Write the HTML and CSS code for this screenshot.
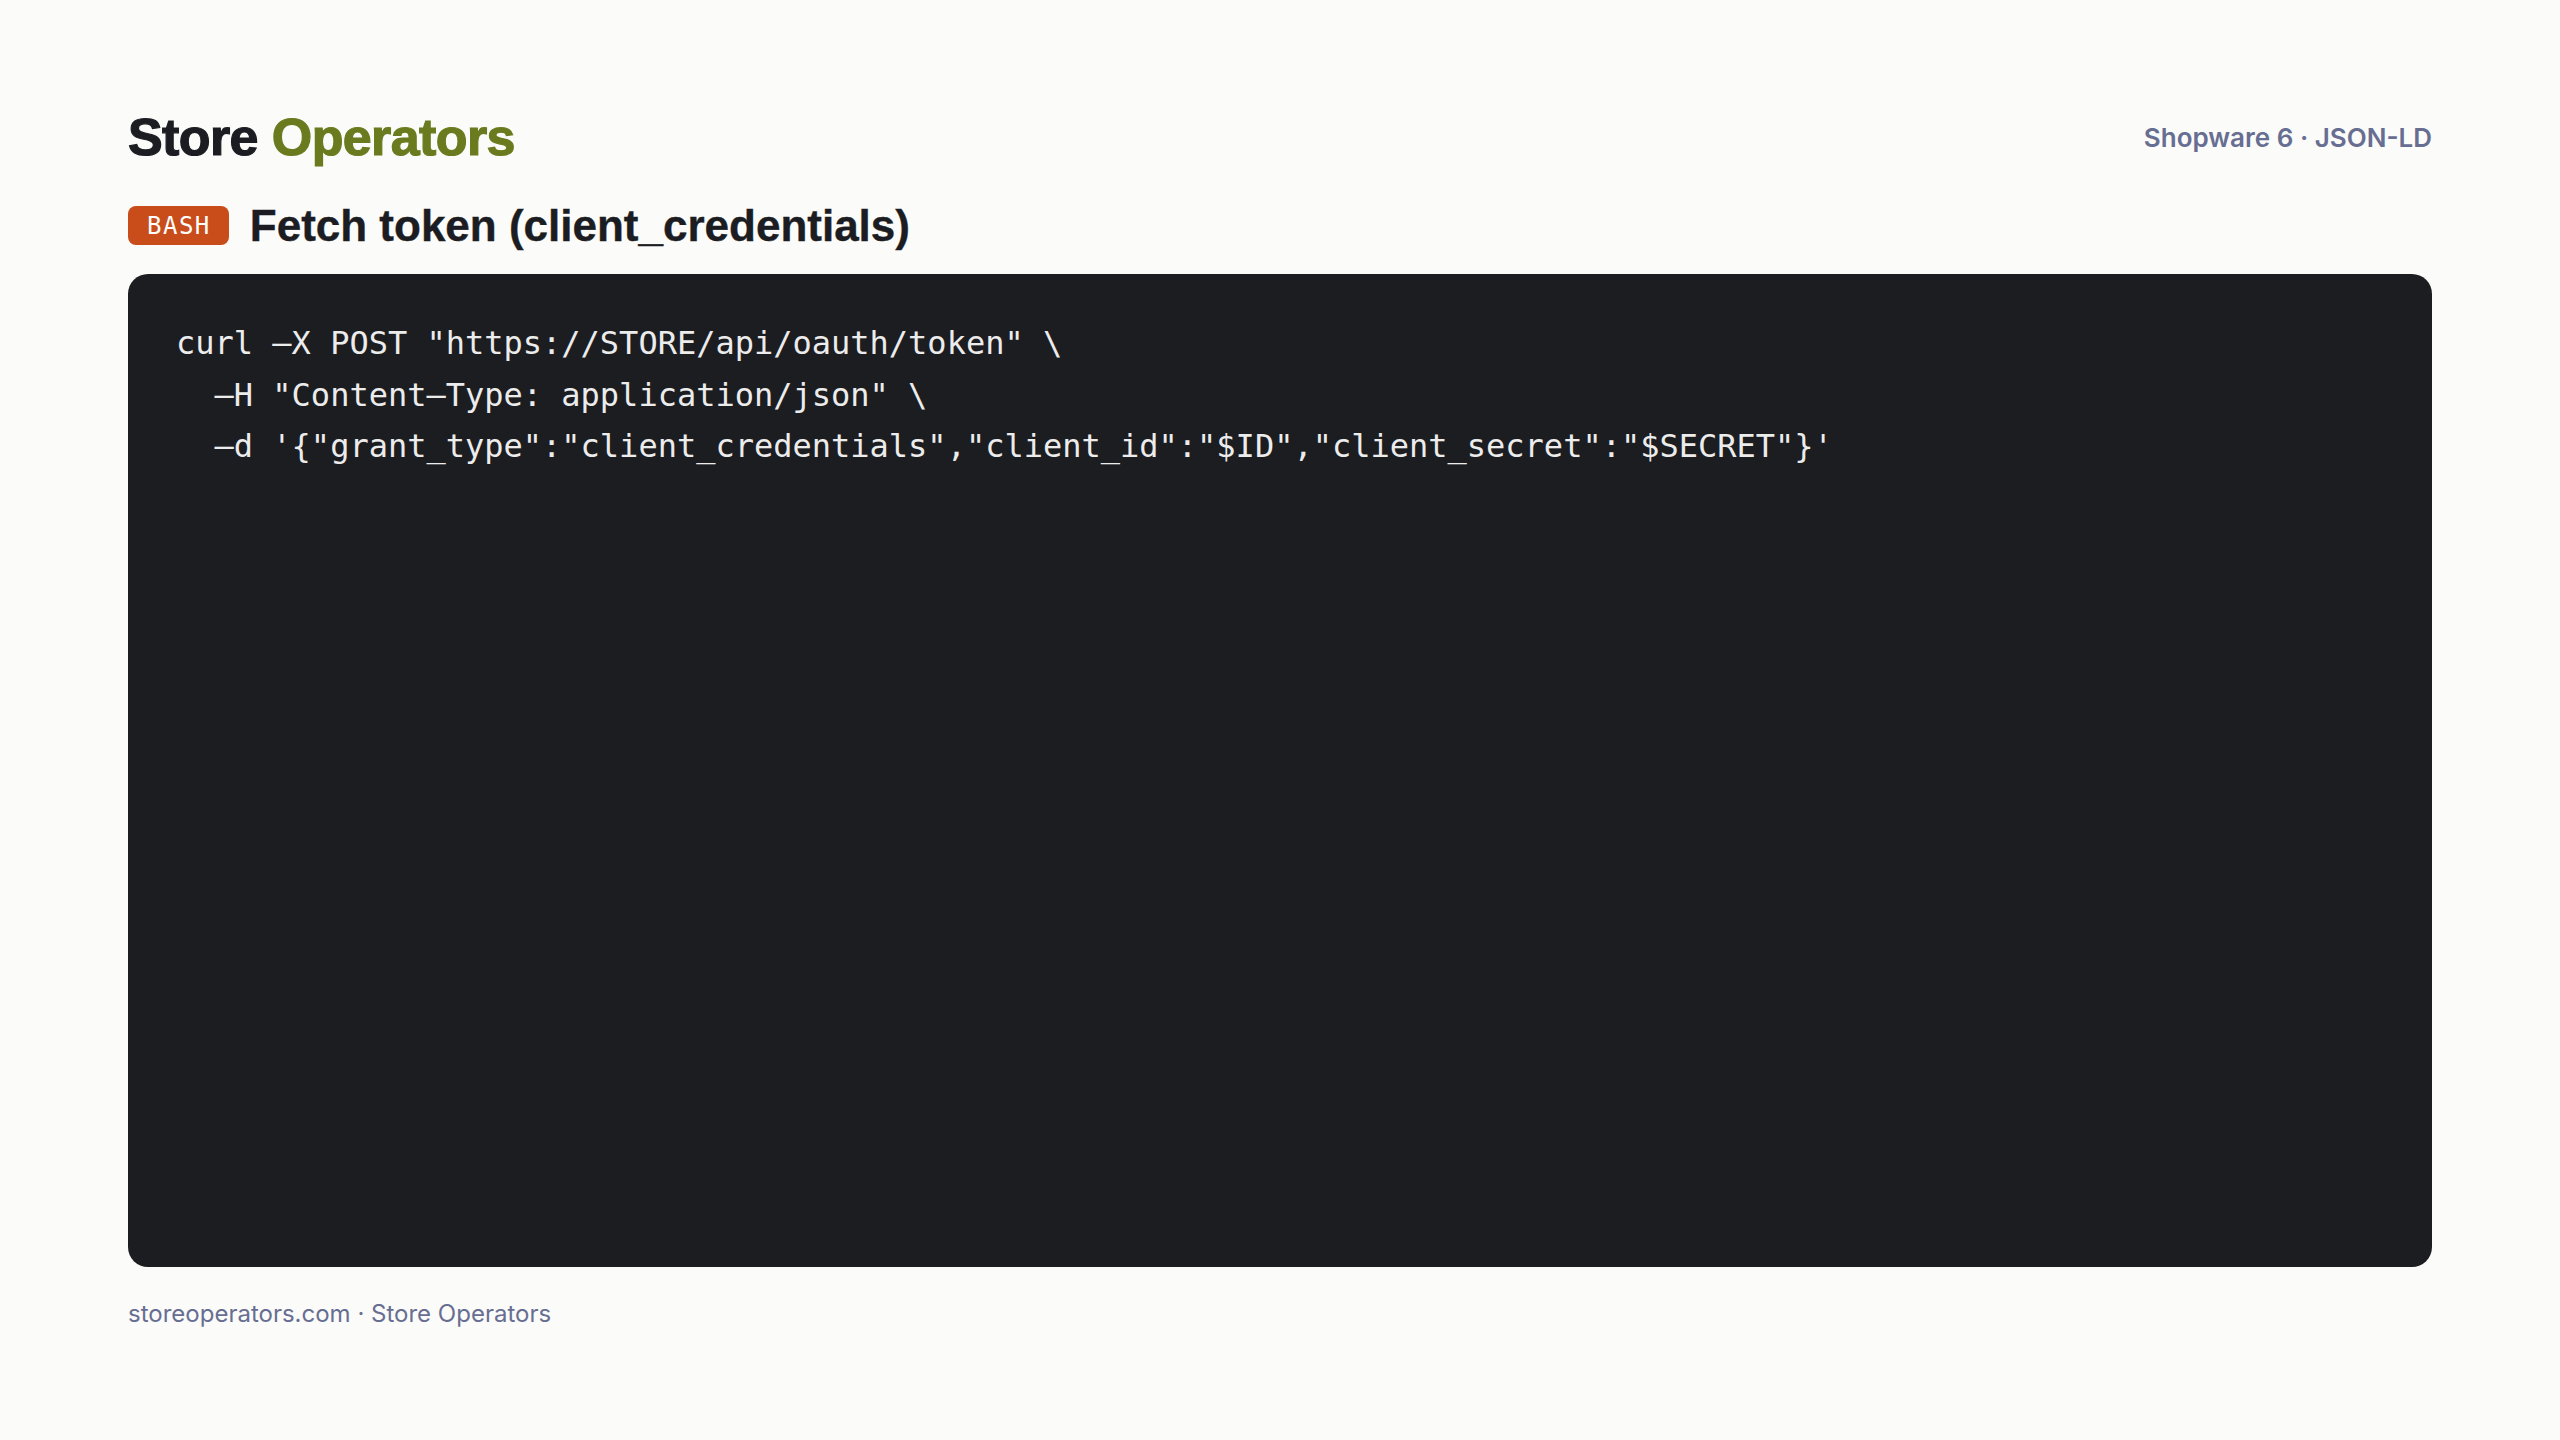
FILE: index.html
```html
<!DOCTYPE html>
<html lang="en">
<head>
<meta charset="utf-8">
<title>Store Operators — Fetch token</title>
<link rel="stylesheet" href="styles.css">
</head>
<body>
<div class="page">
  <header class="top">
    <h1 class="brand">Store <span class="brand-accent">Operators</span></h1>
    <div class="meta">Shopware 6 · JSON-LD</div>
  </header>
  <div class="titlebar">
    <span class="badge">BASH</span>
    <h2 class="heading">Fetch token (client_credentials)</h2>
  </div>
  <pre class="code">curl –X POST "https://STORE/api/oauth/token" \
  –H "Content–Type: application/json" \
  –d '{"grant_type":"client_credentials","client_id":"$ID","client_secret":"$SECRET"}'</pre>
  <footer class="foot">storeoperators.com · Store Operators</footer>
</div>
</body>
</html>
```

FILE: styles.css
```css
html, body {
  margin: 0;
  padding: 0;
  background: #fbfbf9;
}

.page {
  box-sizing: border-box;
  width: 2560px;
  height: 1440px;
  padding: 106px 128px 112px;
  display: flex;
  flex-direction: column;
}

.top {
  display: flex;
  justify-content: space-between;
  align-items: center;
}

.brand {
  margin: 0;
  font-family: "Liberation Sans", Arial, sans-serif;
  font-weight: 700;
  font-size: 52px;
  line-height: 62px;
  letter-spacing: -0.6px;
  color: #1c1d22;
  -webkit-text-stroke: 1.2px currentColor;
}

.brand-accent {
  color: #6a7b1f;
}

.meta {
  font-family: Inter, "Liberation Sans", sans-serif;
  font-weight: 600;
  font-size: 26px;
  color: #676e92;
}

.titlebar {
  display: flex;
  align-items: center;
  gap: 21px;
  margin-top: 31px;
}

.badge {
  display: inline-flex;
  align-items: center;
  height: 39px;
  padding: 0 18px 0 19px;
  border-radius: 8px;
  background: #c94c1b;
  color: #ffffff;
  font-family: "DejaVu Sans Mono", monospace;
  font-size: 24px;
  letter-spacing: 1.5px;
}

.heading {
  margin: 0;
  font-family: "Liberation Sans", Arial, sans-serif;
  font-weight: 700;
  font-size: 44px;
  line-height: 53px;
  color: #1c1d22;
  -webkit-text-stroke: 0.4px currentColor;
}

.code {
  flex: 1;
  margin: 22px 0 0;
  padding: 44px 48px;
  border-radius: 20px;
  background: #1c1d21;
  color: #ececec;
  font-family: "DejaVu Sans Mono", monospace;
  font-size: 32px;
  line-height: 51.5px;
  white-space: pre;
  overflow: hidden;
}

.foot {
  margin-top: 32px;
  font-family: Inter, "Liberation Sans", sans-serif;
  font-size: 24px;
  color: #676e92;
}
```
